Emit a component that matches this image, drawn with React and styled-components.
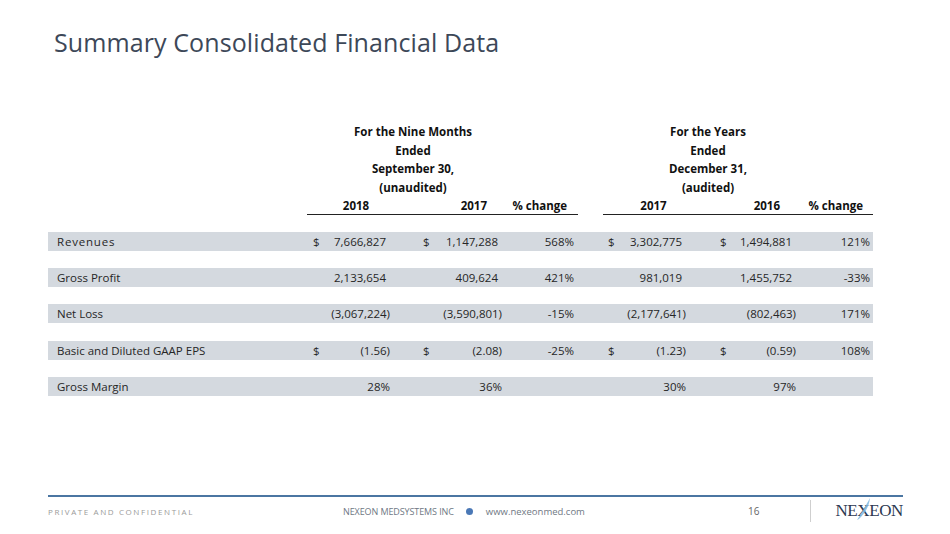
import styled, { createGlobalStyle } from "styled-components";

const GlobalStyle = createGlobalStyle`
  html, body {
    margin: 0;
    padding: 0;
    background: #ffffff;
  }
  body {
    font-family: "Open Sans", "Liberation Sans", sans-serif;
  }
`;

const COLS = "257px 90px 112px 71px 22px 90px 110px 73px";

const Slide = styled.div`
  width: 950px;
  height: 534px;
  display: flex;
  flex-direction: column;
  background: #ffffff;
  overflow: hidden;
`;

const Title = styled.h1`
  margin: 0;
  padding: 25px 0 0 54px;
  font-size: 25px;
  line-height: 34px;
  font-weight: 400;
  color: #3d4858;
  letter-spacing: 0.1px;
`;

const Table = styled.div`
  margin: 64px 0 0 48px;
  width: 825px;
  color: #1f1f1f;
`;

const HeadGrid = styled.div`
  display: grid;
  grid-template-columns: ${COLS};
  font-size: 11.5px;
  font-weight: 700;
  line-height: 18.7px;
  color: #111;
`;

const GroupHead = styled.div`
  grid-row: 1;
  grid-column: ${(p) => p.$span};
  text-align: center;
  padding-left: ${(p) => p.$shift}px;
`;

const YearHead = styled.div`
  grid-row: 2;
  grid-column: ${(p) => p.$col};
  text-align: ${(p) => p.$align};
  line-height: 16px;
  padding: 0 ${(p) => p.$pr || 0}px 0 ${(p) => p.$pl || 0}px;
  border-bottom: 1px solid #222;
  margin-left: ${(p) => p.$ml || 0}px;
`;

const Rows = styled.div`
  display: flex;
  flex-direction: column;
  gap: 17.3px;
  margin-top: 17px;
`;

const Row = styled.div`
  display: grid;
  grid-template-columns: ${COLS};
  height: 19px;
  align-items: center;
  background: #d4d9df;
  font-size: 11.5px;
  color: #262626;
`;

const Label = styled.div`
  padding-left: 9px;
  white-space: nowrap;
  letter-spacing: ${(p) => (p.$spaced ? "0.8px" : "0")};
`;

const Amount = styled.div`
  grid-column: ${(p) => p.$col};
  display: flex;
  justify-content: space-between;
  padding: 0 ${(p) => p.$pr}px 0 ${(p) => p.$pl}px;
  white-space: nowrap;
`;

const Value = styled.span`
  margin-left: auto;
`;

const Footer = styled.footer`
  margin-top: auto;
  padding: 0 47px 9px 48px;
`;

const Rule = styled.div`
  height: 2px;
  background: #4b76a2;
`;

const FooterRow = styled.div`
  height: 28px;
  display: flex;
  align-items: center;
`;

const Confidential = styled.div`
  flex: 0 0 295px;
  font-size: 8px;
  letter-spacing: 1.6px;
  color: #9a9a9a;
`;

const FootText = styled.span`
  font-size: ${(p) => p.$size}px;
  color: #6f7884;
  letter-spacing: ${(p) => (p.$tight ? "-0.1px" : "0")};
`;

const Dot = styled.span`
  width: 7px;
  height: 7px;
  border-radius: 50%;
  background: #4a78b6;
  margin: 0 13px 0 12px;
`;

const PageNum = styled.span`
  margin-left: auto;
  font-size: 10px;
  color: #666;
`;

const Divider = styled.div`
  width: 1px;
  height: 22px;
  background: #cfcfcf;
  margin: 0 24px 0 51px;
`;

const Logo = styled.div`
  font-family: "Liberation Serif", "DejaVu Serif", serif;
  font-size: 17px;
  color: #2c3851;
  letter-spacing: -0.4px;
  display: flex;
`;

const LogoX = styled.span`
  position: relative;
`;

const Feather = styled.svg`
  position: absolute;
  left: -1px;
  top: -4px;
  width: 15px;
  height: 24px;
`;

const cols = [
  { col: 2, pl: 8, pr: 5 },
  { col: 3, pl: 28, pr: 5 },
  { col: 4, pl: 0, pr: 4, pct: true },
  { col: 6, pl: 8, pr: 4 },
  { col: 7, pl: 30, pr: 4 },
  { col: 8, pl: 0, pr: 3, pct: true },
];

// cell: [dollar, text, hangs] — hangs = right edge sits where ")" does
const rows = [
  {
    label: "Revenues",
    spaced: true,
    cells: [
      ["$", "7,666,827"],
      ["$", "1,147,288"],
      ["", "568%"],
      ["$", "3,302,775"],
      ["$", "1,494,881"],
      ["", "121%"],
    ],
  },
  {
    label: "Gross Profit",
    cells: [
      ["", "2,133,654"],
      ["", "409,624"],
      ["", "421%"],
      ["", "981,019"],
      ["", "1,455,752"],
      ["", "-33%"],
    ],
  },
  {
    label: "Net Loss",
    cells: [
      ["", "(3,067,224)", true],
      ["", "(3,590,801)", true],
      ["", "-15%"],
      ["", "(2,177,641)", true],
      ["", "(802,463)", true],
      ["", "171%"],
    ],
  },
  {
    label: "Basic and Diluted GAAP EPS",
    cells: [
      ["$", "(1.56)", true],
      ["$", "(2.08)", true],
      ["", "-25%"],
      ["$", "(1.23)", true],
      ["$", "(0.59)", true],
      ["", "108%"],
    ],
  },
  {
    label: "Gross Margin",
    cells: [
      ["", "28%", true],
      ["", "36%", true],
      ["", ""],
      ["", "30%", true],
      ["", "97%", true],
      ["", ""],
    ],
  },
];

const App = () => {
  return (
    <>
      <GlobalStyle />
      <Slide>
        <Title>Summary Consolidated Financial Data</Title>
        <Table>
          <HeadGrid>
            <GroupHead $span="2 / 4" $shift={14}>
              For the Nine Months
              <br />
              Ended
              <br />
              September 30,
              <br />
              (unaudited)
            </GroupHead>
            <GroupHead $span="6 / 8" $shift={16}>
              For the Years
              <br />
              Ended
              <br />
              December 31,
              <br />
              (audited)
            </GroupHead>
            <YearHead $col={2} $align="center" $pl={10} $ml={2}>2018</YearHead>
            <YearHead $col={3} $align="right" $pr={20}>2017</YearHead>
            <YearHead $col={4} $align="right" $pr={11}>% change</YearHead>
            <YearHead $col={6} $align="center" $pl={14} $ml={3}>2017</YearHead>
            <YearHead $col={7} $align="right" $pr={20}>2016</YearHead>
            <YearHead $col={8} $align="right" $pr={10}>% change</YearHead>
          </HeadGrid>
          <Rows>
            {rows.map((r) => (
              <Row key={r.label}>
                <Label $spaced={r.spaced}>{r.label}</Label>
                {r.cells.map(([dollar, text, hangs], i) => {
                  const c = cols[i];
                  const pr = c.pct || hangs ? c.pr : c.pr + 4;
                  return (
                    <Amount key={i} $col={c.col} $pl={c.pl} $pr={pr}>
                      {dollar && <span>{dollar}</span>}
                      <Value>{text}</Value>
                    </Amount>
                  );
                })}
              </Row>
            ))}
          </Rows>
        </Table>
        <Footer>
          <Rule />
          <FooterRow>
            <Confidential>PRIVATE AND CONFIDENTIAL</Confidential>
            <FootText $size={9} $tight>NEXEON MEDSYSTEMS INC</FootText>
            <Dot />
            <FootText $size={9.5}>www.nexeonmed.com</FootText>
            <PageNum>16</PageNum>
            <Divider />
            <Logo>
              NE
              <LogoX>
                X
                <Feather viewBox="0 0 15 24">
                  <path
                    d="M1 23 C5 17 9 10 14 1 C13 9 10 15 3 22 Z"
                    fill="#7fb8e0"
                    opacity="0.85"
                  />
                </Feather>
              </LogoX>
              EON
            </Logo>
          </FooterRow>
        </Footer>
      </Slide>
    </>
  );
};

export default App;
